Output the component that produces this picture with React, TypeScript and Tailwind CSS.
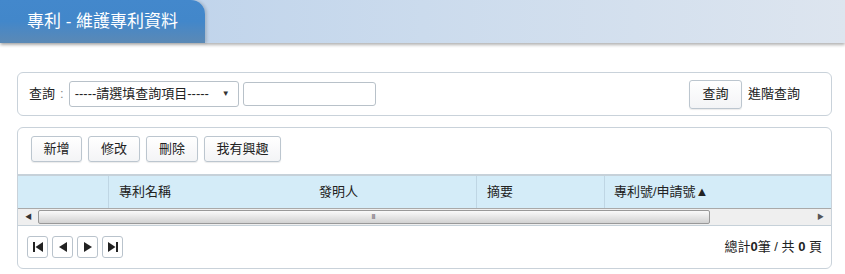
import React from 'react';

const font = { fontFamily: '"Liberation Sans", "Noto Sans CJK TC", sans-serif' };

const PagerIcon = ({ kind }: { kind: 'first' | 'prev' | 'next' | 'last' }) => (
    <svg width="12" height="12" viewBox="0 0 12 12" className="text-[#222]">
        {kind === 'first' && (
            <>
                <rect x="1" y="1" width="2" height="10" fill="currentColor" />
                <path d="M11 1L3.5 6L11 11Z" fill="currentColor" />
            </>
        )}
        {kind === 'prev' && <path d="M10 1L2 6L10 11Z" fill="currentColor" />}
        {kind === 'next' && <path d="M2 1L10 6L2 11Z" fill="currentColor" />}
        {kind === 'last' && (
            <>
                <path d="M1 1L8.5 6L1 11Z" fill="currentColor" />
                <rect x="9" y="1" width="2" height="10" fill="currentColor" />
            </>
        )}
    </svg>
);

const ToolButton = ({ label, w }: { label: string; w: string }) => (
    <button className={`${w} h-[26px] rounded-[3px] border border-[#bcc6cf] bg-gradient-to-b from-white to-[#f3f4f6] text-[13px] text-[#222] shadow-[0_1px_1px_rgba(0,0,0,0.08)]`}>
        {label}
    </button>
);

export default function App() {
    const actions = [
        { label: '新增', w: 'w-[51px]' },
        { label: '修改', w: 'w-[52px]' },
        { label: '刪除', w: 'w-[52px]' },
        { label: '我有興趣', w: 'w-[77px]' },
    ];

    return (
        <div className="w-[845px] h-[274px] bg-white overflow-hidden text-[#222]" style={font}>
            {/* Title bar */}
            <div className="h-[43px] flex bg-gradient-to-r from-[#b8cfea] via-[#cbdbed] to-[#dde5ef] shadow-[0_2px_3px_rgba(0,0,0,0.3)] relative">
                <div className="w-[205px] h-full rounded-tr-[14px] bg-gradient-to-b from-[#4388cc] via-[#4287ca] to-[#5b89b5] flex items-center pl-[27px] text-white text-[17px] shadow-[2px_0_3px_rgba(0,0,0,0.15)]">
                    專利 - 維護專利資料
                </div>
            </div>

            <div className="pl-[17px] pr-[13px] pt-[29px] w-full flex flex-col gap-[11px]">
                {/* Search panel */}
                <div className="h-[44px] rounded-[6px] border border-[#c9d2da] flex items-center pl-[11px] pr-[31px] text-[13px]">
                    <span>查詢</span>
                    <span className="ml-[5px] text-[#888]">:</span>
                    <div className="ml-[5px] w-[170px] h-[26px] rounded-[3px] border border-[#b8c1c9] flex items-center pl-[5px] pr-[8px] justify-between">
                        <span>-----請選填查詢項目-----</span>
                        <span className="text-[8px] text-[#333]">▼</span>
                    </div>
                    <div className="ml-[4px] w-[133px] h-[24px] rounded-[3px] border border-[#b8c1c9]" />
                    <button className="ml-auto w-[53px] h-[29px] rounded-[3px] border border-[#bcc6cf] bg-gradient-to-b from-white to-[#f3f4f6] text-[13px] shadow-[0_1px_1px_rgba(0,0,0,0.08)]">
                        查詢
                    </button>
                    <span className="ml-[6px]">進階查詢</span>
                </div>

                {/* Grid panel */}
                <div className="h-[142px] rounded-[6px] border border-[#c9d2da] flex flex-col">
                    <div className="flex gap-[6px] pl-[13px] pt-[8px] h-[46px]">
                        {actions.map((a) => (
                            <ToolButton key={a.label} label={a.label} w={a.w} />
                        ))}
                    </div>

                    <div className="h-[34px] border-t-2 border-[#c6d1d9] bg-[#d4ecf8] flex text-[13px] text-[#222]">
                        <div className="w-[91px] border-r border-[#bfd6e4]" />
                        <div className="w-[368px] border-r border-[#bfd6e4] flex items-center">
                            <span className="ml-[10px]">專利名稱</span>
                            <span className="ml-[148px]">發明人</span>
                        </div>
                        <div className="w-[128px] border-r border-[#bfd6e4] flex items-center pl-[10px]">摘要</div>
                        <div className="flex-1 flex items-center pl-[9px]">專利號/申請號▲</div>
                    </div>

                    {/* Horizontal scrollbar */}
                    <div className="h-[18px] bg-[#efefef] border-t border-[#a9a9a9] border-b border-b-[#c6d1d9] flex items-center px-[4px]">
                        <span className="text-[7px] text-[#333] w-[12px] ml-[3px]">◀</span>
                        <div className="w-[672px] h-[14px] ml-[1px] rounded-[2px] border border-[#999] bg-gradient-to-b from-[#fafafa] via-[#e6e6e6] to-[#d2d2d2] flex items-center justify-center">
                            <span className="text-[8px] text-[#777] tracking-[-1px] mr-[2px]">III</span>
                        </div>
                        <span className="ml-auto mr-[3px] text-[7px] text-[#555]">▶</span>
                    </div>

                    {/* Pager */}
                    <div className="flex-1 flex items-center pl-[9px] pr-[9px]">
                        <div className="flex gap-[4px]">
                            {(['first', 'prev', 'next', 'last'] as const).map((k) => (
                                <button key={k} className="w-[21px] h-[22px] rounded-[3px] border border-[#b9c3cc] bg-white flex items-center justify-center">
                                    <PagerIcon kind={k} />
                                </button>
                            ))}
                        </div>
                        <span className="ml-auto text-[13px]">
                            總計<b>0</b>筆 / 共 <b>0</b> 頁
                        </span>
                    </div>
                </div>
            </div>
        </div>
    );
}
